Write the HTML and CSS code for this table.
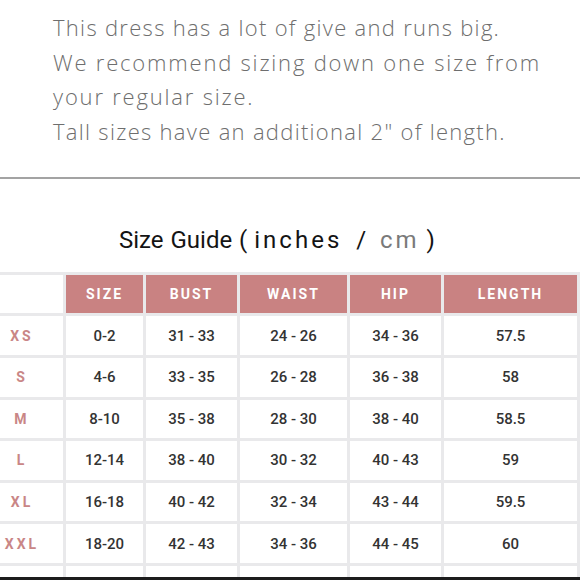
FILE: index.html
```html
<!DOCTYPE html>
<html lang="en">
<head>
<meta charset="utf-8">
<title>Size Guide</title>
<link rel="stylesheet" href="styles.css">
</head>
<body>
<div class="page">
  <div class="content">
    <div class="note">
      <p>This dress has a lot of give and runs big.</p>
      <p class="wide">We recommend sizing down one size from your regular size.</p>
      <p>Tall sizes have an additional 2" of length.</p>
    </div>
    <hr class="divider">
    <h2 class="title">Size Guide ( <span class="unit">inches</span>&nbsp; / &nbsp;<span class="unit alt">cm</span> )</h2>
    <div class="chart">
      <div class="cell blank"></div>
      <div class="cell head">SIZE</div>
      <div class="cell head">BUST</div>
      <div class="cell head">WAIST</div>
      <div class="cell head">HIP</div>
      <div class="cell head">LENGTH</div>

      <div class="cell label">XS</div><div class="cell">0-2</div><div class="cell">31 - 33</div><div class="cell">24 - 26</div><div class="cell">34 - 36</div><div class="cell">57.5</div>
      <div class="cell label">S</div><div class="cell">4-6</div><div class="cell">33 - 35</div><div class="cell">26 - 28</div><div class="cell">36 - 38</div><div class="cell">58</div>
      <div class="cell label">M</div><div class="cell">8-10</div><div class="cell">35 - 38</div><div class="cell">28 - 30</div><div class="cell">38 - 40</div><div class="cell">58.5</div>
      <div class="cell label">L</div><div class="cell">12-14</div><div class="cell">38 - 40</div><div class="cell">30 - 32</div><div class="cell">40 - 43</div><div class="cell">59</div>
      <div class="cell label">XL</div><div class="cell">16-18</div><div class="cell">40 - 42</div><div class="cell">32 - 34</div><div class="cell">43 - 44</div><div class="cell">59.5</div>
      <div class="cell label">XXL</div><div class="cell">18-20</div><div class="cell">42 - 43</div><div class="cell">34 - 36</div><div class="cell">44 - 45</div><div class="cell">60</div>
      <div class="cell"></div><div class="cell"></div><div class="cell"></div><div class="cell"></div><div class="cell"></div><div class="cell"></div>
    </div>
  </div>
  <div class="edge"></div>
</div>
</body>
</html>
```

FILE: styles.css
```css
html, body {
  margin: 0;
  padding: 0;
  background: #ffffff;
}

.page {
  width: 580px;
  height: 580px;
  display: flex;
  flex-direction: column;
  overflow: hidden;
}

.content {
  flex: 1;
  min-height: 0;
  overflow: hidden;
}

.note {
  padding: 10px 0 0 53px;
  font-family: "Open Sans", sans-serif;
  font-weight: 300;
  font-size: 22px;
  line-height: 34.7px;
  letter-spacing: 1.3px;
  color: #6e6e6e;
}

.note p {
  margin: 0;
  width: 510px;
}

.note p.wide {
  letter-spacing: 1.8px;
}

.divider {
  margin: 28px 0 0 0;
  border: 0;
  height: 2px;
  background: #a3a3a3;
}

.title {
  margin: 46px 0 0 0;
  padding-left: 119px;
  text-align: left;
  font-family: Roboto, sans-serif;
  font-weight: 400;
  font-size: 24px;
  line-height: 30px;
  color: #141414;
  white-space: nowrap;
  word-spacing: 1px;
}

.unit {
  letter-spacing: 3px;
}

.unit.alt {
  color: #7a7a7a;
}

.chart {
  margin: 17px 0 0 -3px;
  display: grid;
  grid-template-columns: 63px 77px 91px 107px 91px 133px;
  grid-auto-rows: 38.6px;
  gap: 3px;
  padding: 3px;
  width: max-content;
  background: #e9e9eb;
}

.cell {
  background: #ffffff;
  display: flex;
  align-items: center;
  justify-content: center;
  font-family: Roboto, sans-serif;
  font-weight: 500;
  font-size: 15px;
  color: #333333;
}

.cell.head {
  background: #c98282;
  color: #ffffff;
  font-weight: 700;
  font-size: 14px;
  letter-spacing: 2px;
}

.cell.label {
  padding: 0 22px 0 3px;
  color: #c98686;
  font-weight: 700;
  font-size: 14px;
  letter-spacing: 3px;
}

.edge {
  height: 3px;
  background: #1c1c1c;
}
```
